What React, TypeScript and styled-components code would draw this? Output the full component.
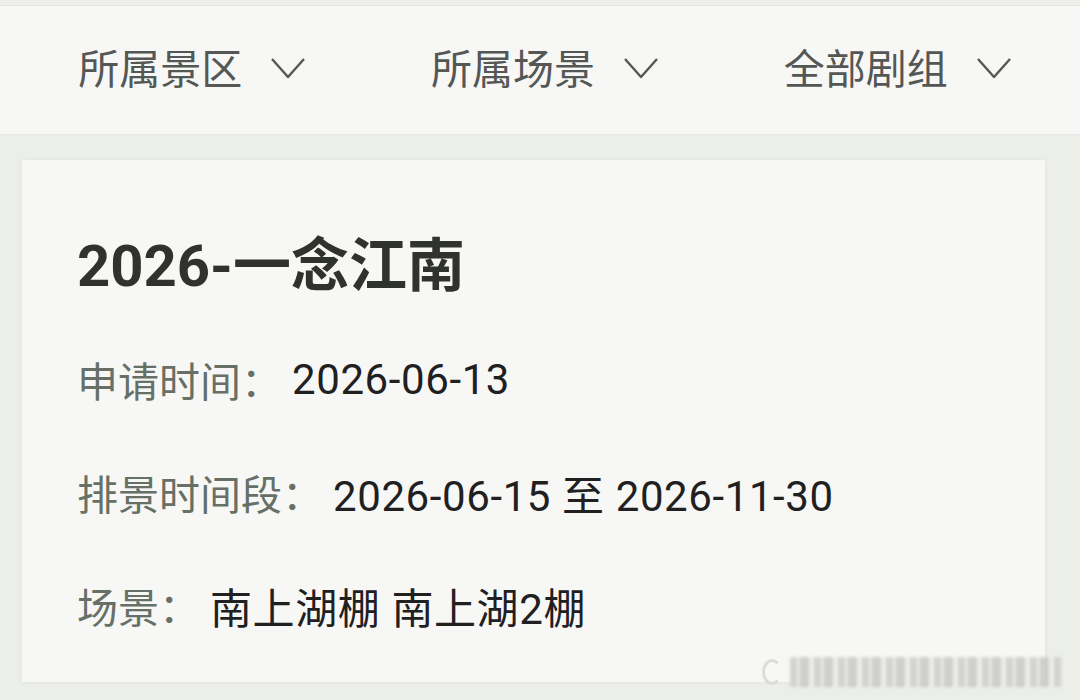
import React from 'react';
import styled, { createGlobalStyle } from 'styled-components';

const GlobalStyle = createGlobalStyle`
  html, body {
    margin: 0;
    padding: 0;
    background: #eceeea;
  }
  body {
    font-family: Roboto, "Noto Sans CJK SC", sans-serif;
    width: 1080px;
    height: 700px;
    overflow: hidden;
  }
`;

const Page = styled.div`
  position: relative;
  width: 1080px;
  height: 700px;
  padding-top: 5px;
  box-sizing: border-box;
`;

const FilterBar = styled.div`
  display: grid;
  grid-template-columns: repeat(3, 1fr);
  align-items: center;
  height: 130px;
  padding: 0 6px 8px 16px;
  background: #f7f8f5;
  border-top: 1px solid #e3e5e1;
  border-bottom: 1px solid #e6e8e4;
  box-sizing: border-box;
`;

const Filter = styled.div`
  justify-self: center;
  display: flex;
  align-items: center;
  gap: 28px;
  font-family: "Noto Sans CJK SC", sans-serif;
  font-size: 41px;
  color: #555755;
`;

const Chevron = styled.svg`
  width: 36px;
  height: 22px;
  margin-top: 4px;
`;

const Card = styled.div`
  display: flex;
  flex-direction: column;
  gap: 57px;
  margin: 25px 35px 0 22px;
  padding: 78px 55px 49px;
  background: #f7f8f5;
  box-shadow: 0 0 6px rgba(0, 0, 0, 0.05);
`;

const Title = styled.div`
  height: 56px;
  line-height: 56px;
  font-size: 58px;
  font-weight: 700;
  color: #303230;
  white-space: nowrap;
`;

const Row = styled.div`
  display: flex;
  align-items: center;
  height: 56px;
  font-size: 41px;
  white-space: nowrap;
`;

const Label = styled.span`
  font-family: "Noto Sans CJK SC", sans-serif;
  color: #667066;
`;

const Value = styled.span`
  margin-left: 10px;
  font-size: 42px;
  color: #1f201f;
  letter-spacing: 0.6px;
`;

const Watermark = styled.div`
  position: absolute;
  right: 18px;
  bottom: 12px;
  display: flex;
  align-items: center;
  gap: 8px;
  width: 300px;
  height: 32px;
`;

const Ring = styled.div`
  width: 20px;
  height: 26px;
  border: 3px solid #dcdddb;
  border-right-color: transparent;
  border-radius: 50%;
  box-sizing: border-box;
`;

const Smear = styled.div`
  flex: 1;
  height: 30px;
  filter: blur(1.5px);
  background: repeating-linear-gradient(
    90deg,
    #d0d1cf 0 7px,
    #e6e7e5 7px 10px,
    #cbccca 10px 19px,
    #ecedeb 19px 24px
  );
  opacity: 0.9;
`;

const filters = ['所属景区', '所属场景', '全部剧组'];

const rows = [
  { label: '申请时间：', value: '2026-06-13' },
  { label: '排景时间段：', value: '2026-06-15 至 2026-11-30' },
  { label: '场景：', value: '南上湖棚 南上湖2棚' },
];

export default function App() {
  return (
    <Page>
      <GlobalStyle />
      <FilterBar>
        {filters.map((f) => (
          <Filter key={f}>
            {f}
            <Chevron viewBox="0 0 36 22" fill="none">
              <path d="M2 2 L18 20 L34 2" stroke="#555755" strokeWidth="2.4" strokeLinejoin="round" />
            </Chevron>
          </Filter>
        ))}
      </FilterBar>
      <Card>
        <Title>2026-一念江南</Title>
        {rows.map((r) => (
          <Row key={r.label}>
            <Label>{r.label}</Label>
            <Value>{r.value}</Value>
          </Row>
        ))}
      </Card>
      <Watermark>
        <Ring />
        <Smear />
      </Watermark>
    </Page>
  );
}
